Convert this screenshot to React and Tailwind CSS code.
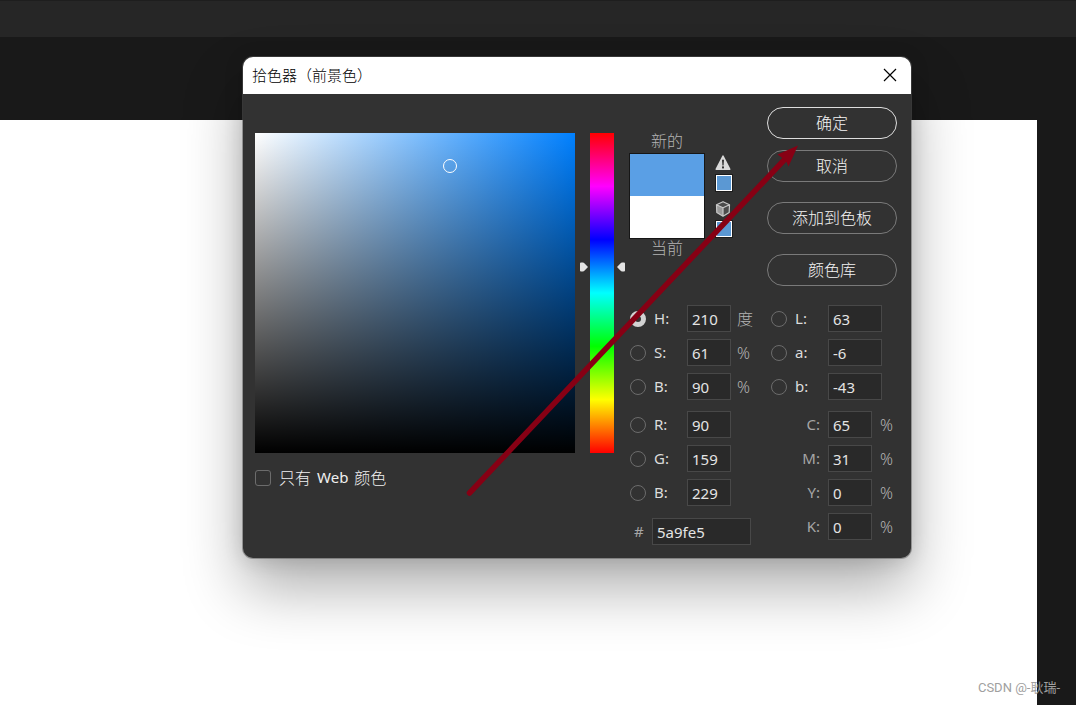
import React, { useState } from 'react';

const fieldBox =
  'h-[27px] min-w-0 border border-[#484848] bg-[#292929] px-1 text-[15px] text-[#e4e4e4] outline-none focus:border-[#7a7a7a]';

function ChannelRow({ id, label, value, unit, selected, onSelect, inputWidth }) {
  return (
    <div className="flex h-[27px] items-center">
      <input
        type="radio"
        id={id}
        name="channel"
        checked={selected === id}
        onChange={() => onSelect(id)}
        className="size-4 shrink-0 appearance-none rounded-full border border-[#6c6c6c] checked:border-[5px] checked:border-[#d2d2d2]"
      />
      <label htmlFor={id} className="w-[41px] shrink-0 pl-2 text-[#dcdcdc]">
        {label}:
      </label>
      <input type="text" aria-label={label} defaultValue={value} className={`${fieldBox} ${inputWidth}`} />
      {unit && <span className="pl-[6px] text-[16px] font-light text-[#b4b4b4]">{unit}</span>}
    </div>
  );
}

function InkRow({ id, label, value }) {
  return (
    <div className="flex h-[27px] items-center">
      <label htmlFor={id} className="w-[57px] shrink-0 pr-2 text-right text-[#a6a6a6]">
        {label}:
      </label>
      <input type="text" id={id} defaultValue={value} className={`${fieldBox} w-11`} />
      <span className="pl-2 text-[16px] font-light text-[#b4b4b4]">%</span>
    </div>
  );
}

function PillButton({ children, primary }) {
  return (
    <button
      type="button"
      className={`h-8 w-full rounded-full border font-light text-[16px] text-[#f4f4f4] ${
        primary ? 'border-[#dedede]' : 'border-[#7a7a7a]'
      }`}
    >
      {children}
    </button>
  );
}

function WarningIcon() {
  return (
    <svg width="16" height="16" viewBox="0 0 16 16" aria-hidden="true">
      <path d="M8 0.300 Q8.500 0.300 8.900 1.200L15.500 14Q15.700 15 14.800 15H1.200Q0.300 15 0.500 14L7.100 1.200Q7.500 0.300 8 0.300Z" fill="#dadada" />
      <path d="M7 4.800h2l-.4 5.600H7.400Z" fill="#333" />
      <rect x="7" y="11.400" width="2" height="2" fill="#333" />
    </svg>
  );
}

function CubeIcon() {
  return (
    <svg width="16" height="16" viewBox="0 0 16 16" aria-hidden="true">
      <path d="M8 .7 14.500 3.800 14.200 11.500 8 15.200 1.800 11.500 1.500 3.800Z" fill="#4c4c4c" />
      <path d="M1.500 3.800 8 6.800v8.400L1.800 11.500Z" fill="#9a9a9a" />
      <path
        d="M8 .7 14.500 3.800 14.200 11.500 8 15.200 1.800 11.500 1.500 3.800ZM1.500 3.800 8 6.800 14.500 3.800M8 6.800v8.400"
        fill="none"
        stroke="#c8c8c8"
        strokeWidth="1.200"
        strokeLinejoin="round"
      />
    </svg>
  );
}

function Swatch({ label }) {
  return (
    <button type="button" aria-label={label} className="size-[18px] border border-[#1c1c1c] bg-white p-px">
      <span className="block size-full bg-[#5b98d3]" />
    </button>
  );
}

function HueSlider() {
  return (
    <div className="relative mx-[15px] mt-[26px] h-80 w-6 shrink-0 bg-[linear-gradient(to_bottom,#f00,#f0f,#00f,#0ff,#0f0,#ff0,#f00)]">
      <input
        type="range"
        aria-label="色相"
        min="0"
        max="360"
        defaultValue="210"
        className="absolute inset-0 size-full opacity-0 [direction:rtl] [writing-mode:vertical-lr]"
      />
      <svg
        className="pointer-events-none absolute top-[129px] -left-[11px]"
        width="46"
        height="10"
        viewBox="0 0 46 10"
        aria-hidden="true"
      >
        <path d="M1 1.500Q1 .5 2 .5H3.800Q4.800 .5 5.600 1.500L9 5 5.600 8.500Q4.800 9.500 3.800 9.500H2Q1 9.500 1 8.500Z" fill="#e4e4e4" />
        <path d="M46 1.500Q46 .5 45 .5H43.200Q42.200 .5 41.400 1.500L38 5 41.400 8.500Q42.200 9.500 43.200 9.500H45Q46 9.500 46 8.500Z" fill="#e4e4e4" />
      </svg>
    </div>
  );
}

function ColorPickerDialog() {
  const [channel, setChannel] = useState('hue');
  const shared = { selected: channel, onSelect: setChannel };
  return (
    <section
      role="dialog"
      aria-label="拾色器（前景色）"
      className="absolute top-[57px] left-[243px] w-[668px] rounded-[10px] bg-[#323232] shadow-[0_0_0_1px_rgba(90,90,90,0.5),0_30px_60px_rgba(0,0,0,0.32),0_2px_20px_rgba(0,0,0,0.14)]"
    >
      <header className="flex h-[37px] items-center justify-between rounded-t-[10px] bg-white pr-[14px] pl-[9px]">
        <h1 className="text-[15px] font-light text-black">拾色器（前景色）</h1>
        <button type="button" aria-label="关闭" className="text-black">
          <svg width="14" height="15" viewBox="0 0 14 15" fill="none" stroke="currentColor" strokeWidth="1.2" aria-hidden="true">
            <path d="M1 1 13 13M13 1 1 13" />
          </svg>
        </button>
      </header>

      <div className="flex px-3 py-[13px] pr-[14px]">
        <div className="w-80 shrink-0 pt-[26px]">
          <div className="relative aspect-square bg-[linear-gradient(to_top,#000,transparent),linear-gradient(to_right,#fff,#0080ff)]">
            <span className="absolute top-[33px] left-[195px] size-[14px] -translate-x-1/2 -translate-y-1/2 rounded-full border border-white" />
          </div>
          <div className="mt-3 flex h-[25px] items-center gap-2">
            <input
              type="checkbox"
              id="web-only"
              className="size-4 appearance-none rounded-[3px] border border-[#6c6c6c] checked:bg-[#d2d2d2]"
            />
            <label htmlFor="web-only" className="flex gap-[6px] text-[16px] font-light text-[#f0f0f0]">
              <span>只有</span>
              <span className="text-[15px] font-normal">Web</span>
              <span>颜色</span>
            </label>
          </div>
        </div>

        <HueSlider />

        <div className="min-w-0 flex-1">
          <div className="flex h-[198px]">
            <div className="w-[76px] pt-[25px] text-center text-[16px] leading-[18px] font-light text-[#b4b4b4]">
              <p>新的</p>
              <div className="mt-[3px] h-[86px] border border-[#161616]">
                <div className="h-1/2 bg-[#5a9fe5]" />
                <div className="h-1/2 bg-white" />
              </div>
              <p>当前</p>
            </div>
            <div className="ml-[10px] flex w-[18px] flex-col pt-12">
              <WarningIcon />
              <div className="mt-[3px] mb-[9px] flex">
                <Swatch label="可打印颜色" />
              </div>
              <CubeIcon />
              <div className="mt-[3px] flex">
                <Swatch label="Web 安全颜色" />
              </div>
            </div>
            <div className="ml-auto flex w-[130px] flex-col gap-5">
              <div className="flex flex-col gap-[11px]">
                <PillButton primary>确定</PillButton>
                <PillButton>取消</PillButton>
              </div>
              <PillButton>添加到色板</PillButton>
              <PillButton>颜色库</PillButton>
            </div>
          </div>

          <div className="flex text-[15px]">
            <div className="w-[142px] shrink-0 pl-px">
              <div className="flex flex-col gap-[7px]">
                <ChannelRow id="hue" label="H" value="210" unit="度" inputWidth="w-11" {...shared} />
                <ChannelRow id="saturation" label="S" value="61" unit="%" inputWidth="w-11" {...shared} />
                <ChannelRow id="brightness" label="B" value="90" unit="%" inputWidth="w-11" {...shared} />
              </div>
              <div className="mt-[11px] flex flex-col gap-[7px]">
                <ChannelRow id="red" label="R" value="90" inputWidth="w-11" {...shared} />
                <ChannelRow id="green" label="G" value="159" inputWidth="w-11" {...shared} />
                <ChannelRow id="blue" label="B" value="229" inputWidth="w-11" {...shared} />
              </div>
              <div className="mt-3 flex h-[27px] items-center">
                <label htmlFor="hex" className="w-[22px] pl-1 text-[#a6a6a6]">
                  #
                </label>
                <input type="text" id="hex" defaultValue="5a9fe5" className={`${fieldBox} w-[99px]`} />
              </div>
            </div>
            <div className="min-w-0 flex-1">
              <div className="flex flex-col gap-[7px]">
                <ChannelRow id="lab-l" label="L" value="63" inputWidth="w-[54px]" {...shared} />
                <ChannelRow id="lab-a" label="a" value="-6" inputWidth="w-[54px]" {...shared} />
                <ChannelRow id="lab-b" label="b" value="-43" inputWidth="w-[54px]" {...shared} />
              </div>
              <div className="mt-[11px] flex flex-col gap-[7px]">
                <InkRow id="cyan" label="C" value="65" />
                <InkRow id="magenta" label="M" value="31" />
                <InkRow id="yellow" label="Y" value="0" />
                <InkRow id="black" label="K" value="0" />
              </div>
            </div>
          </div>
        </div>
      </div>
    </section>
  );
}

function PointerArrow() {
  return (
    <svg
      className="pointer-events-none absolute top-[140px] left-[460px]"
      width="345"
      height="360"
      viewBox="460 140 345 360"
      aria-hidden="true"
    >
      <path d="M469.500 493 786 158" stroke="#870014" strokeWidth="5.500" strokeLinecap="round" />
      <path d="M798 145.500 777.500 154.500 783 158.500 786.500 162 788.500 166.500Z" fill="#870014" />
    </svg>
  );
}

export default function App() {
  return (
    <div className="relative flex min-h-screen flex-col overflow-hidden bg-[#191919] font-['Noto_Sans','Noto_Sans_CJK_SC',sans-serif]">
      <div className="h-[37px] border-t border-[#1e1e1e] bg-[#262626]" />
      <main className="mt-[83px] mr-[39px] flex-1 bg-white" />
      <ColorPickerDialog />
      <PointerArrow />
      <p className="absolute right-4 bottom-2 font-['Roboto','Noto_Sans_CJK_SC',sans-serif] text-[13px] leading-[18px] text-[#a0a0a0]">
        CSDN @-耿瑞-
      </p>
    </div>
  );
}
